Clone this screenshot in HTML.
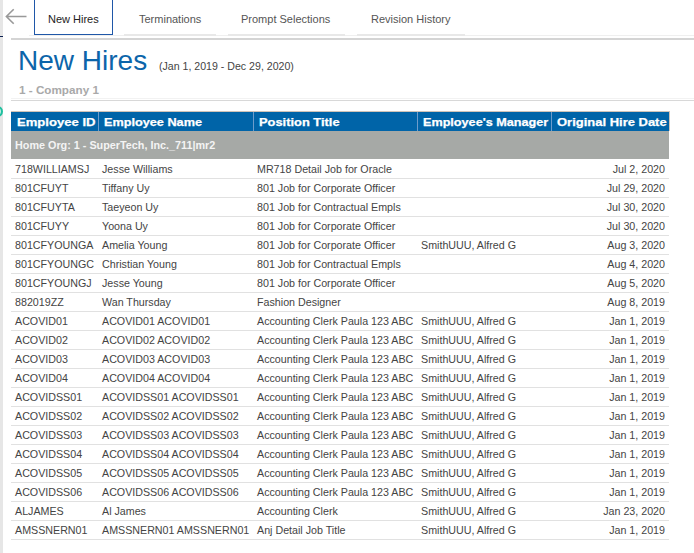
<!DOCTYPE html>
<html><head><meta charset="utf-8"><style>
*{margin:0;padding:0;box-sizing:border-box}
html,body{width:694px;height:553px;overflow:hidden;background:#fff;font-family:"Liberation Sans",sans-serif;position:relative}
.abs{position:absolute}
#strip{left:0;top:0;width:3px;height:553px;background:#e6e6e6}
#navy{left:0;top:36px;width:3px;height:1px;background:#0d2050}
#teal{left:-8px;top:106px;width:11px;height:11px;border-radius:50%;border:2px solid #1fbf9f;background:#bfeee4}
.tab{position:absolute;top:0;height:35px;font-size:11px;color:#555;line-height:12px}
.tabline{position:absolute;top:34px;height:2px;background:#e8e8e8}
#bar{left:11px;top:38px;width:683px;height:2px;background:#d4d4d4}
#title{left:18px;top:44px;font-size:28px;color:#0c65aa;line-height:34px;white-space:nowrap}
#sub{left:159px;top:60px;font-size:10.6px;color:#444;line-height:13px;white-space:nowrap}
#comp{left:19px;top:83px;font-size:11.7px;font-weight:bold;color:#a9a9a9;line-height:14px;white-space:nowrap}
#l1{left:11px;top:98px;width:683px;height:1px;background:#f2f2f2}
#l2{left:11px;top:100px;width:683px;height:1px;background:#d8d8d8}
#hdr{left:11px;top:111px;width:659px;height:20px;background:#0064a8;border-top:1px solid #cfc3b8;border-right:1px solid #cfc3b8}
.h{position:absolute;top:1px;height:19px;line-height:19px;color:#fff;font-weight:bold;font-size:11px;white-space:nowrap}
.h span{display:inline-block;transform-origin:0 50%;-webkit-text-stroke:0.25px #fff;transform:scaleX(1.165)}
.dv{position:absolute;top:0;width:1px;height:19px;background:#6d9ccb}
#org{left:11px;top:131px;width:658px;height:28px;background:#a6a9a6;color:#f4f4f4;font-weight:bold;font-size:10.8px;line-height:28px;padding-left:4px;white-space:nowrap}
.r{position:absolute;left:11px;width:658px;height:19px;border-bottom:1px solid #e1e1e1;font-size:10.7px;color:#444;line-height:19px;padding-top:1px;white-space:nowrap}
.r span{position:absolute;top:0}
.c1{left:4px}.c2{left:91px}.c3{left:246px}.c4{left:410px}.c5{right:4px}
</style></head><body>
<div id="strip" class="abs"></div>
<div id="navy" class="abs"></div>
<div id="teal" class="abs"></div>
<svg class="abs" style="left:0;top:0" width="34" height="34"><path d="M26.5 16.5H6.5M13.7 9.2L6.4 16.5L13.7 23.8" fill="none" stroke="#999" stroke-width="1.6"/></svg>
<div class="abs" style="left:29px;top:35px;width:665px;height:1px;background:#efefef"></div>
<div class="tabline" style="left:124px;width:92px"></div>
<div class="tabline" style="left:228px;width:117px"></div>
<div class="tabline" style="left:357px;width:108px"></div>
<div class="abs" style="left:34px;top:0;width:79px;height:35px;border:1px solid #1f57a8;border-top:none"></div>
<div class="tab" style="left:48px;top:13px;color:#222">New Hires</div>
<div class="tab" style="left:139px;top:13px">Terminations</div>
<div class="tab" style="left:241px;top:13px">Prompt Selections</div>
<div class="tab" style="left:371px;top:13px">Revision History</div>
<div id="bar" class="abs"></div>
<div id="title" class="abs">New Hires</div>
<div id="sub" class="abs">(Jan 1, 2019 - Dec 29, 2020)</div>
<div id="comp" class="abs">1 - Company 1</div>
<div id="l1" class="abs"></div>
<div id="l2" class="abs"></div>
<div id="hdr" class="abs">
<div class="h" style="left:5.5px"><span style="transform:scaleX(1.19)">Employee ID</span></div>
<div class="dv" style="left:87px"></div>
<div class="h" style="left:93px"><span style="transform:scaleX(1.153)">Employee Name</span></div>
<div class="dv" style="left:242px"></div>
<div class="h" style="left:248px"><span style="transform:scaleX(1.17)">Position Title</span></div>
<div class="dv" style="left:406px"></div>
<div class="h" style="left:411.5px"><span style="transform:scaleX(1.148)">Employee's Manager</span></div>
<div class="dv" style="left:540px"></div>
<div class="h" style="left:546px"><span style="transform:scaleX(1.18)">Original Hire Date</span></div>
</div>
<div id="org" class="abs">Home Org: 1 - SuperTech, Inc._711|mr2</div>
<div class="r" style="top:160px"><span class="c1">718WILLIAMSJ</span><span class="c2">Jesse Williams</span><span class="c3">MR718 Detail Job for Oracle</span><span class="c4"></span><span class="c5">Jul 2, 2020</span></div>
<div class="r" style="top:179px"><span class="c1">801CFUYT</span><span class="c2">Tiffany Uy</span><span class="c3">801 Job for Corporate Officer</span><span class="c4"></span><span class="c5">Jul 29, 2020</span></div>
<div class="r" style="top:198px"><span class="c1">801CFUYTA</span><span class="c2">Taeyeon Uy</span><span class="c3">801 Job for Contractual Empls</span><span class="c4"></span><span class="c5">Jul 30, 2020</span></div>
<div class="r" style="top:217px"><span class="c1">801CFUYY</span><span class="c2">Yoona Uy</span><span class="c3">801 Job for Corporate Officer</span><span class="c4"></span><span class="c5">Jul 30, 2020</span></div>
<div class="r" style="top:236px"><span class="c1">801CFYOUNGA</span><span class="c2">Amelia Young</span><span class="c3">801 Job for Corporate Officer</span><span class="c4">SmithUUU, Alfred G</span><span class="c5">Aug 3, 2020</span></div>
<div class="r" style="top:255px"><span class="c1">801CFYOUNGC</span><span class="c2">Christian Young</span><span class="c3">801 Job for Contractual Empls</span><span class="c4"></span><span class="c5">Aug 4, 2020</span></div>
<div class="r" style="top:274px"><span class="c1">801CFYOUNGJ</span><span class="c2">Jesse Young</span><span class="c3">801 Job for Corporate Officer</span><span class="c4"></span><span class="c5">Aug 5, 2020</span></div>
<div class="r" style="top:293px"><span class="c1">882019ZZ</span><span class="c2">Wan Thursday</span><span class="c3">Fashion Designer</span><span class="c4"></span><span class="c5">Aug 8, 2019</span></div>
<div class="r" style="top:312px"><span class="c1">ACOVID01</span><span class="c2">ACOVID01 ACOVID01</span><span class="c3">Accounting Clerk Paula 123 ABC</span><span class="c4">SmithUUU, Alfred G</span><span class="c5">Jan 1, 2019</span></div>
<div class="r" style="top:331px"><span class="c1">ACOVID02</span><span class="c2">ACOVID02 ACOVID02</span><span class="c3">Accounting Clerk Paula 123 ABC</span><span class="c4">SmithUUU, Alfred G</span><span class="c5">Jan 1, 2019</span></div>
<div class="r" style="top:350px"><span class="c1">ACOVID03</span><span class="c2">ACOVID03 ACOVID03</span><span class="c3">Accounting Clerk Paula 123 ABC</span><span class="c4">SmithUUU, Alfred G</span><span class="c5">Jan 1, 2019</span></div>
<div class="r" style="top:369px"><span class="c1">ACOVID04</span><span class="c2">ACOVID04 ACOVID04</span><span class="c3">Accounting Clerk Paula 123 ABC</span><span class="c4">SmithUUU, Alfred G</span><span class="c5">Jan 1, 2019</span></div>
<div class="r" style="top:388px"><span class="c1">ACOVIDSS01</span><span class="c2">ACOVIDSS01 ACOVIDSS01</span><span class="c3">Accounting Clerk Paula 123 ABC</span><span class="c4">SmithUUU, Alfred G</span><span class="c5">Jan 1, 2019</span></div>
<div class="r" style="top:407px"><span class="c1">ACOVIDSS02</span><span class="c2">ACOVIDSS02 ACOVIDSS02</span><span class="c3">Accounting Clerk Paula 123 ABC</span><span class="c4">SmithUUU, Alfred G</span><span class="c5">Jan 1, 2019</span></div>
<div class="r" style="top:426px"><span class="c1">ACOVIDSS03</span><span class="c2">ACOVIDSS03 ACOVIDSS03</span><span class="c3">Accounting Clerk Paula 123 ABC</span><span class="c4">SmithUUU, Alfred G</span><span class="c5">Jan 1, 2019</span></div>
<div class="r" style="top:445px"><span class="c1">ACOVIDSS04</span><span class="c2">ACOVIDSS04 ACOVIDSS04</span><span class="c3">Accounting Clerk Paula 123 ABC</span><span class="c4">SmithUUU, Alfred G</span><span class="c5">Jan 1, 2019</span></div>
<div class="r" style="top:464px"><span class="c1">ACOVIDSS05</span><span class="c2">ACOVIDSS05 ACOVIDSS05</span><span class="c3">Accounting Clerk Paula 123 ABC</span><span class="c4">SmithUUU, Alfred G</span><span class="c5">Jan 1, 2019</span></div>
<div class="r" style="top:483px"><span class="c1">ACOVIDSS06</span><span class="c2">ACOVIDSS06 ACOVIDSS06</span><span class="c3">Accounting Clerk Paula 123 ABC</span><span class="c4">SmithUUU, Alfred G</span><span class="c5">Jan 1, 2019</span></div>
<div class="r" style="top:502px"><span class="c1">ALJAMES</span><span class="c2">Al James</span><span class="c3">Accounting Clerk</span><span class="c4">SmithUUU, Alfred G</span><span class="c5">Jan 23, 2020</span></div>
<div class="r" style="top:521px"><span class="c1">AMSSNERN01</span><span class="c2">AMSSNERN01 AMSSNERN01</span><span class="c3">Anj Detail Job Title</span><span class="c4">SmithUUU, Alfred G</span><span class="c5">Jan 1, 2019</span></div>
</body></html>
